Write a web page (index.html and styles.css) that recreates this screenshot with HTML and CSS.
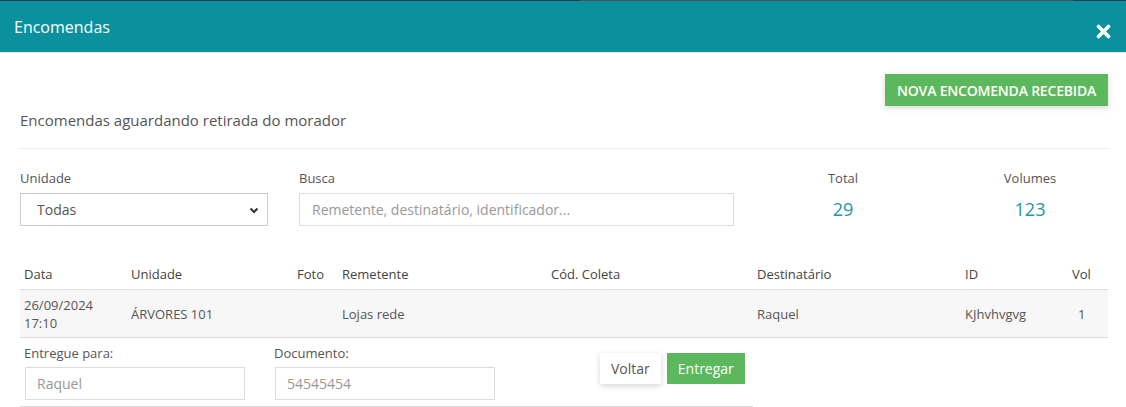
FILE: index.html
```html
<!DOCTYPE html>
<html lang="pt-BR">
<head>
  <meta charset="UTF-8">
  <title>Encomendas</title>
  <link rel="stylesheet" href="styles.css">
</head>
<body>
  <div class="backdrop-edge"></div>

  <div class="modal">
    <div class="modal-header">
      <h4>Encomendas</h4>
      <button class="close" title="Fechar">
        <svg width="15" height="15" viewBox="0 0 15 15"><path d="M2.5 2.5 L12.5 12.5 M12.5 2.5 L2.5 12.5" stroke="#fff" stroke-width="3.6" stroke-linecap="round"/></svg>
      </button>
    </div>

    <div class="modal-body">
      <div class="actions">
        <button class="btn btn-green raised upper">Nova encomenda recebida</button>
      </div>
      <p class="subtitle">Encomendas aguardando retirada do morador</p>
      <hr>

      <!-- filtros -->
      <div class="filters">
        <div class="field unit">
          <label>Unidade</label>
          <div class="select-wrap">
            <select><option>Todas</option></select>
            <svg class="chevron" width="10" height="7" viewBox="0 0 10 7"><path d="M1.5 1.5 L5 5 L8.5 1.5" fill="none" stroke="#333" stroke-width="2"/></svg>
          </div>
        </div>
        <div class="field search">
          <label>Busca</label>
          <input type="text" placeholder="Remetente, destinatário, identificador...">
        </div>
        <div class="stat first">
          <span>Total</span>
          <strong>29</strong>
        </div>
        <div class="stat">
          <span>Volumes</span>
          <strong>123</strong>
        </div>
      </div>

      <!-- tabela -->
      <table class="grid">
        <colgroup>
          <col style="width:107px">
          <col style="width:130px">
          <col style="width:81px">
          <col style="width:209px">
          <col style="width:206px">
          <col style="width:208px">
          <col style="width:103px">
          <col style="width:44px">
        </colgroup>
        <thead>
          <tr>
            <th>Data</th>
            <th>Unidade</th>
            <th class="foto">Foto</th>
            <th>Remetente</th>
            <th>Cód. Coleta</th>
            <th>Destinatário</th>
            <th>ID</th>
            <th class="vol">Vol</th>
          </tr>
        </thead>
        <tbody>
          <tr class="row">
            <td>26/09/2024<br>17:10</td>
            <td>ÁRVORES 101</td>
            <td class="foto"></td>
            <td>Lojas rede</td>
            <td></td>
            <td>Raquel</td>
            <td>KJhvhvgvg</td>
            <td class="vol">1</td>
          </tr>
          <tr class="deliver">
            <td colspan="5">
              <div class="deliver-form">
                <div class="field small">
                  <label>Entregue para:</label>
                  <input type="text" value="Raquel">
                </div>
                <div class="field small">
                  <label>Documento:</label>
                  <input type="text" value="54545454">
                </div>
                <div class="deliver-buttons">
                  <button class="btn btn-white raised">Voltar</button>
                  <button class="btn btn-green">Entregar</button>
                </div>
              </div>
            </td>
            <td colspan="3" class="empty"></td>
          </tr>
        </tbody>
      </table>
    </div>
  </div>
</body>
</html>
```

FILE: styles.css
```css
* {
  box-sizing: border-box;
}
body {
  margin: 0;
  font-family: "Open Sans", "Noto Sans", sans-serif;
  color: #555;
  background: #fff;
  overflow: hidden;
}

/* faixa escura do fundo */
.backdrop-edge {
  height: 1px;
  background: linear-gradient(to right, #1e3d52 0, #1e3d52 580px, #4b555e 580px, #4b555e 1073px, #1e3d52 1073px);
}

.modal-header {
  display: flex;
  align-items: center;
  justify-content: space-between;
  height: 52px;
  background: #0b919e;
  border-bottom: 1px solid #e5e5e5;
  padding: 0 14px 0 14px;
}
.modal-header h4 {
  margin: 0;
  font-size: 16px;
  font-weight: 400;
  color: #fff;
}
.close {
  background: none;
  border: 0;
  padding: 0;
  margin-top: 10px;
  margin-right: 1px;
  line-height: 0;
  cursor: pointer;
}

.modal-body {
  padding: 21px 18px 0 20px;
}
.actions {
  display: flex;
  justify-content: flex-end;
}

.btn {
  font-family: inherit;
  border: 0;
  border-radius: 0;
  cursor: pointer;
}
.btn-green {
  background: #5cb85c;
  color: #fff;
}
.btn-white {
  background: #fff;
  color: #555;
}
.raised {
  box-shadow: 0 2px 6px rgba(0, 0, 0, 0.16);
}
.upper {
  text-transform: uppercase;
  font-size: 14px;
  font-weight: 600;
  height: 32px;
  padding: 0 12px;
  letter-spacing: -0.2px;
}

.subtitle {
  margin: 4px 0 0;
  font-size: 15px;
  line-height: 20px;
}
hr {
  border: 0;
  border-top: 1px solid #eee;
  margin: 18px 0 0;
}

/* filtros */
.filters {
  display: flex;
  margin-top: 20px;
}
.field label {
  display: block;
  font-size: 13px;
  line-height: 18px;
  margin-bottom: 6px;
}
.field.unit {
  width: 248px;
}
.field.search {
  width: 435px;
  margin-left: 31px;
}
.select-wrap {
  position: relative;
}
select, input {
  width: 100%;
  height: 33px;
  font-family: inherit;
  font-size: 14px;
  color: #555;
  background: #fff;
  border: 1px solid #ddd;
  border-radius: 0;
  outline: none;
}
select {
  appearance: none;
  -webkit-appearance: none;
  padding: 0 30px 0 16px;
  border-color: #ccc;
}
.chevron {
  position: absolute;
  right: 9px;
  top: 14px;
}
input {
  padding: 0 12px;
}
input::placeholder {
  color: #999;
}
.stat {
  width: 150px;
  text-align: center;
  margin-left: 37px;
}
.stat.first {
  margin-left: 34px;
}
.stat span {
  display: block;
  font-size: 13px;
  line-height: 18px;
}
.stat strong {
  display: block;
  font-weight: 400;
  font-size: 18px;
  line-height: 24px;
  margin-top: 10px;
  color: #1b98a5;
}

/* tabela */
.grid {
  width: 1088px;
  margin-top: 33px;
  border-collapse: collapse;
  table-layout: fixed;
  font-size: 13px;
}
.grid th {
  text-align: left;
  font-weight: 400;
  color: #444;
  height: 30px;
  padding: 0 4px;
  border-bottom: 1px solid #ddd;
  vertical-align: middle;
}
.grid td {
  padding: 0 4px;
  line-height: 18px;
  vertical-align: middle;
}
.grid .foto {
  text-align: right;
  padding-right: 14px;
}
.grid th.vol {
  padding-left: 8px;
}
.grid td.vol {
  padding-left: 14px;
}
.row td {
  background: #f7f7f7;
  height: 47px;
  padding-top: 6px;
  padding-bottom: 5px;
  border-bottom: 1px solid #ddd;
}
.deliver td {
  border-bottom: 1px solid #ddd;
  padding: 6px 4px 6px;
}
.deliver td.empty {
  border-bottom: 0;
}

.deliver-form {
  display: flex;
  align-items: flex-start;
}
.field.small {
  width: 220px;
  margin-right: 30px;
}
.field.small label {
  margin-bottom: 5px;
}
.field.small input {
  margin-left: 1px;
  padding: 0 11px;
  color: #999;
}
.deliver-buttons {
  display: flex;
  gap: 6px;
  margin-left: 76px;
  margin-top: 9px;
}
.deliver-buttons .btn {
  height: 31px;
  font-size: 14px;
  padding: 0 11px;
}
```
